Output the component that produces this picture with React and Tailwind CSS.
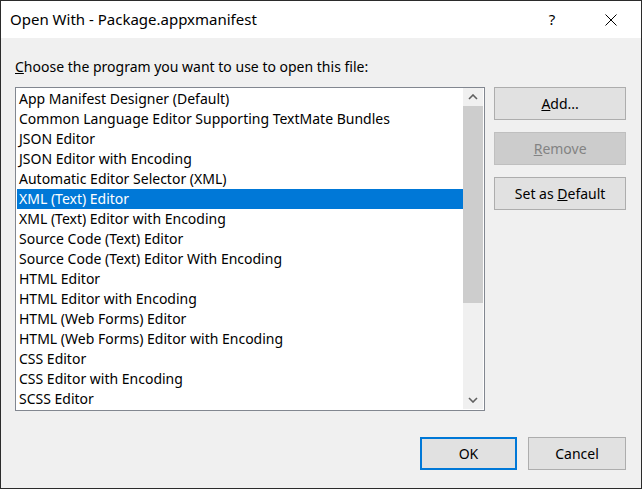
import React from "react";

const items = [
  "App Manifest Designer (Default)",
  "Common Language Editor Supporting TextMate Bundles",
  "JSON Editor",
  "JSON Editor with Encoding",
  "Automatic Editor Selector (XML)",
  "XML (Text) Editor",
  "XML (Text) Editor with Encoding",
  "Source Code (Text) Editor",
  "Source Code (Text) Editor With Encoding",
  "HTML Editor",
  "HTML Editor with Encoding",
  "HTML (Web Forms) Editor",
  "HTML (Web Forms) Editor with Encoding",
  "CSS Editor",
  "CSS Editor with Encoding",
  "SCSS Editor",
];

const SideButton = ({ children, disabled }) => (
  <button
    className={`h-[33px] w-full border text-[14px] ${
      disabled
        ? "bg-[#cccccc] border-[#bfbfbf] text-[#838383]"
        : "bg-[#e1e1e1] border-[#adadad] text-black"
    }`}
  >
    {children}
  </button>
);

export default function App() {
  return (
    <div
      className="w-[642px] h-[489px] border border-[#2b2b2b] bg-[#f0f0f0] flex flex-col text-black"
      style={{ fontFamily: '"Noto Sans", "Open Sans", sans-serif' }}
    >
      {/* Title bar */}
      <div className="h-[37px] bg-white flex items-center shrink-0">
        <span className="pl-[9px] text-[15px] flex-1">Open With - Package.appxmanifest</span>
        <span className="w-[46px] text-center text-[15px] mr-[13px]">?</span>
        <div className="w-[46px] h-full flex items-center justify-center mr-[7px]">
          <svg width="12" height="12" viewBox="0 0 12 12">
            <path d="M0.5 0.5 L11.5 11.5 M11.5 0.5 L0.5 11.5" stroke="#000" strokeWidth="1" />
          </svg>
        </div>
      </div>

      {/* Body */}
      <div className="flex-1 flex flex-col pl-[14px] pr-[15px]">
        <div className="mt-[19px] h-[20px] leading-[20px] text-[14px]">
          <span className="underline">C</span>hoose the program you want to use to open this file:
        </div>

        <div className="mt-[10px] flex gap-[9px]">
          {/* List box */}
          <div className="w-[471px] h-[324px] border border-[#828790] bg-white flex pl-[1px] pt-[1px]">
            <div className="flex-1 flex flex-col">
              {items.map((it, i) => (
                <div
                  key={it}
                  className={`h-[20px] leading-[20px] pl-[2px] text-[14px] whitespace-nowrap overflow-hidden ${
                    i === 5 ? "bg-[#0078d7] text-white" : ""
                  }`}
                >
                  {it}
                </div>
              ))}
            </div>
            <div className="w-[20px] bg-[#f0f0f0] flex flex-col mr-[1px] -mt-[1px] mb-[1px]">
              <div className="h-[18px] flex items-center justify-center">
                <svg width="10" height="6" viewBox="0 0 10 6">
                  <path d="M1 5 L5 1 L9 5" fill="none" stroke="#606060" strokeWidth="1.6" />
                </svg>
              </div>
              <div className="h-[197px] bg-[#cdcdcd]" />
              <div className="flex-1" />
              <div className="h-[18px] flex items-center justify-center">
                <svg width="10" height="6" viewBox="0 0 10 6">
                  <path d="M1 1 L5 5 L9 1" fill="none" stroke="#606060" strokeWidth="1.6" />
                </svg>
              </div>
            </div>
          </div>

          {/* Right buttons */}
          <div className="w-[132px] flex flex-col gap-[12px]">
            <SideButton>
              <span className="underline">A</span>dd...
            </SideButton>
            <SideButton disabled>
              <span className="underline">R</span>emove
            </SideButton>
            <SideButton>
              Set as <span className="underline">D</span>efault
            </SideButton>
          </div>
        </div>

        <div className="mt-[26px] flex justify-end gap-[11px]">
          <button className="w-[97px] h-[33px] border-2 border-[#0078d7] bg-[#e1e1e1] text-[14px]">
            OK
          </button>
          <button className="w-[98px] h-[33px] border border-[#adadad] bg-[#e1e1e1] text-[14px]">
            Cancel
          </button>
        </div>
      </div>
    </div>
  );
}
